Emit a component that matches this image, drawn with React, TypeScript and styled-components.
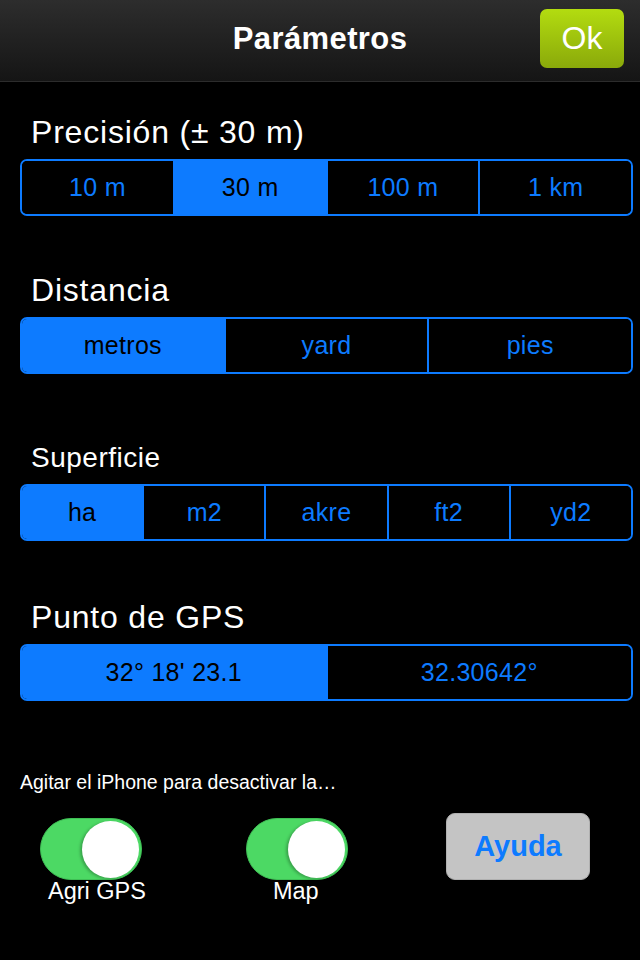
import React from "react";
import styled, { createGlobalStyle } from "styled-components";

const GlobalStyle = createGlobalStyle`
  html, body {
    margin: 0;
    padding: 0;
    background: #000;
  }
  body {
    font-family: "Liberation Sans", Arial, sans-serif;
    -webkit-font-smoothing: antialiased;
  }
`;

type section = {
  title: string;
  small?: boolean;
  gap: number;
  options: string[];
  selected: number;
};

const sections: section[] = [
  {
    title: "Precisión (± 30 m)",
    gap: 32,
    options: ["10 m", "30 m", "100 m", "1 km"],
    selected: 1,
  },
  {
    title: "Distancia",
    gap: 56,
    options: ["metros", "yard", "pies"],
    selected: 0,
  },
  {
    title: "Superficie",
    small: true,
    gap: 68,
    options: ["ha", "m2", "akre", "ft2", "yd2"],
    selected: 0,
  },
  {
    title: "Punto de GPS",
    gap: 58,
    options: ["32° 18' 23.1", "32.30642°"],
    selected: 0,
  },
];

const App: React.FC = () => {
  const [picked, setPicked] = React.useState(sections.map((s) => s.selected));
  const [agri, setAgri] = React.useState(true);
  const [map, setMap] = React.useState(true);

  const pick = (row: number, idx: number) => {
    setPicked((p) => p.map((v, i) => (i === row ? idx : v)));
  };

  return (
    <Screen>
      <GlobalStyle />
      <Header>
        <Title>Parámetros</Title>
        <OkButton>Ok</OkButton>
      </Header>
      <Body>
        {sections.map((s, row) => (
          <Section key={s.title} gap={s.gap}>
            <Label small={s.small}>{s.title}</Label>
            <Segmented>
              {s.options.map((o, i) => (
                <Segment
                  key={o}
                  active={picked[row] === i}
                  onClick={() => pick(row, i)}
                >
                  {o}
                </Segment>
              ))}
            </Segmented>
          </Section>
        ))}
        <Hint>Agitar el iPhone para desactivar la…</Hint>
        <BottomRow>
          <ToggleItem space={20}>
            <Toggle on={agri} onClick={() => setAgri(!agri)}>
              <Knob />
            </Toggle>
            <ToggleLabel offset={8}>Agri GPS</ToggleLabel>
          </ToggleItem>
          <ToggleItem space={100}>
            <Toggle on={map} onClick={() => setMap(!map)}>
              <Knob />
            </Toggle>
            <ToggleLabel offset={27}>Map</ToggleLabel>
          </ToggleItem>
          <HelpButton>Ayuda</HelpButton>
        </BottomRow>
      </Body>
    </Screen>
  );
};

export default App;

const Screen = styled.div`
  width: 640px;
  min-height: 960px;
  background: #000;
  overflow: hidden;
`;

const Header = styled.div`
  height: 81px;
  display: flex;
  align-items: center;
  justify-content: center;
  position: relative;
  background: linear-gradient(#2d2d2d, #151515);
  border-bottom: 1px solid #2c2c2c;
`;

const Title = styled.span`
  color: #fff;
  font-size: 31px;
  font-weight: 700;
  letter-spacing: 0.4px;
  margin-top: -4px;
`;

const OkButton = styled.div`
  position: absolute;
  right: 16px;
  top: 9px;
  width: 84px;
  height: 59px;
  border-radius: 7px;
  background: linear-gradient(#b3dc10, #8aa90a);
  color: #fff;
  font-size: 32px;
  display: flex;
  align-items: center;
  justify-content: center;
  cursor: pointer;
`;

const Body = styled.div`
  padding: 0 7px 0 20px;
`;

const Section = styled.div<{ gap: number }>`
  margin-top: ${({ gap }) => gap}px;
`;

const Label = styled.div<{ small?: boolean }>`
  color: #fff;
  font-size: ${({ small }) => (small ? "28px" : "32px")};
  line-height: ${({ small }) => (small ? "32px" : "37px")};
  letter-spacing: ${({ small }) => (small ? "0.5px" : "0.8px")};
  margin-left: 11px;
  margin-bottom: ${({ small }) => (small ? "10px" : "8px")};
`;

const Segmented = styled.div`
  display: flex;
  height: 57px;
  box-sizing: border-box;
  border: 2px solid #0d7bff;
  border-radius: 7px;
  overflow: hidden;
`;

const Segment = styled.div<{ active: boolean }>`
  flex: 1 1 0;
  display: flex;
  align-items: center;
  justify-content: center;
  font-size: 25px;
  letter-spacing: 0.3px;
  color: ${({ active }) => (active ? "#000" : "#0d7bff")};
  background: ${({ active }) => (active ? "#0d7bff" : "#000")};
  cursor: pointer;
  & + & {
    border-left: 2px solid #0d7bff;
  }
`;

const Hint = styled.div`
  margin-top: 70px;
  color: #fff;
  font-size: 19.5px;
  line-height: 23px;
`;

const BottomRow = styled.div`
  display: flex;
  align-items: flex-start;
  margin-top: 19px;
`;

const ToggleItem = styled.div<{ space: number }>`
  display: flex;
  flex-direction: column;
  align-items: flex-start;
  margin-left: ${({ space }) => space}px;
  margin-top: 5px;
`;

const Toggle = styled.div<{ on: boolean }>`
  width: 102px;
  height: 62px;
  box-sizing: border-box;
  border-radius: 31px;
  padding: 2px;
  display: flex;
  justify-content: ${({ on }) => (on ? "flex-end" : "flex-start")};
  align-items: center;
  background: ${({ on }) => (on ? "#4cd964" : "#e5e5e5")};
  border: 1px solid ${({ on }) => (on ? "#3fbf55" : "#d0d0d0")};
  cursor: pointer;
`;

const Knob = styled.div`
  width: 57px;
  height: 57px;
  border-radius: 50%;
  background: #fff;
  box-shadow: -2px 1px 3px rgba(0, 0, 0, 0.25);
`;

const ToggleLabel = styled.div<{ offset: number }>`
  color: #fff;
  font-size: 23.5px;
  line-height: 26px;
  margin-left: ${({ offset }) => offset}px;
  margin-top: -2px;
`;

const HelpButton = styled.div`
  margin-left: 98px;
  width: 144px;
  height: 67px;
  box-sizing: border-box;
  border-radius: 9px;
  border: 1px solid #b0b0b0;
  background: #c4c4c4;
  color: #0d7bff;
  font-size: 29px;
  font-weight: 700;
  display: flex;
  align-items: center;
  justify-content: center;
  cursor: pointer;
`;
